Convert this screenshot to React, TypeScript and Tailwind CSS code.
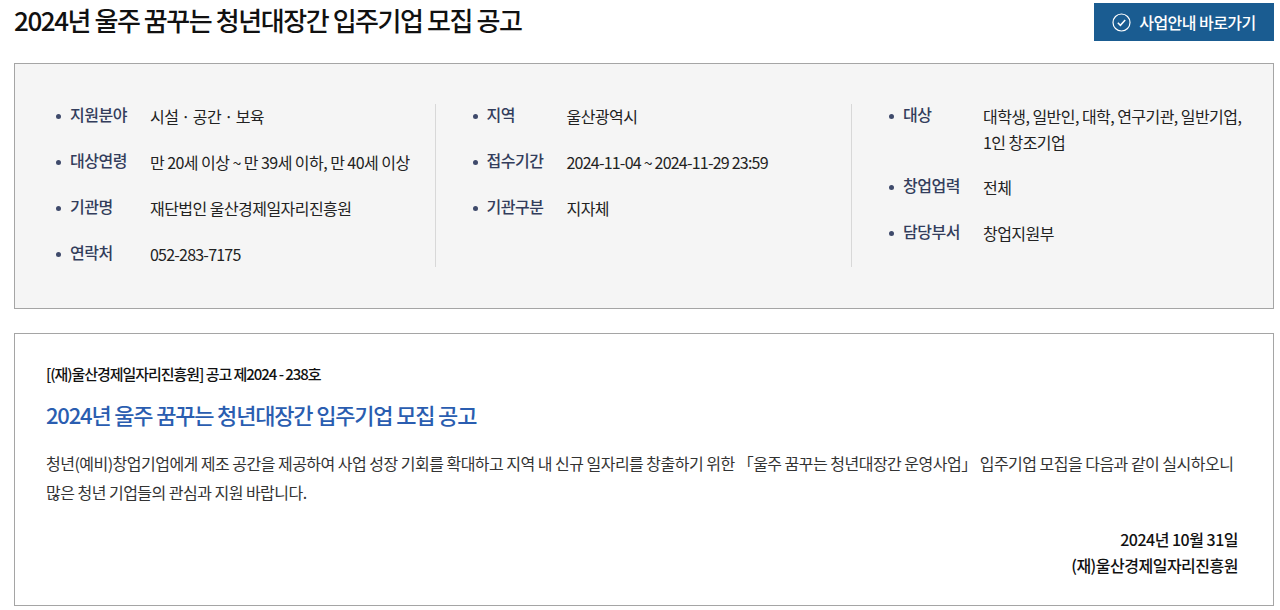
import { Fragment } from "react";

const font = "font-['Noto_Sans_CJK_KR','Noto_Sans',sans-serif]";

const col1 = [
  { label: "지원분야", value: "시설 · 공간 · 보육" },
  { label: "대상연령", value: "만 20세 이상 ~ 만 39세 이하, 만 40세 이상" },
  { label: "기관명", value: "재단법인 울산경제일자리진흥원" },
  { label: "연락처", value: "052-283-7175", tight: true },
];
const col2 = [
  { label: "지역", value: "울산광역시" },
  { label: "접수기간", value: "2024-11-04 ~ 2024-11-29 23:59", tight: true },
  { label: "기관구분", value: "지자체" },
];
const col3 = [
  { label: "대상", value: "대학생, 일반인, 대학, 연구기관, 일반기업, 1인 창조기업" },
  { label: "창업업력", value: "전체" },
  { label: "담당부서", value: "창업지원부" },
];

function InfoColumn({
  items,
  className,
}: {
  items: { label: string; value: string; tight?: boolean }[];
  className: string;
}) {
  return (
    <ul className={className}>
      {items.map((item) => (
        <li key={item.label} className="flex">
          <span className="mt-[10px] mr-[9px] ml-[1px] h-[5px] w-[5px] shrink-0 rounded-full bg-[#3f4a6b]" />
          <span className="mt-[-1px] w-[80px] shrink-0 text-[16px] leading-[22px] font-medium tracking-[-0.5px] text-[#333d5c]">
            {item.label}
          </span>
          <span
            className={
              item.tight
                ? "mt-[-1px] break-keep text-[16px] leading-[26px] tracking-[-0.78px] text-[#222]"
                : "mt-[-1px] break-keep text-[16px] leading-[26px] tracking-[-0.55px] text-[#222]"
            }
          >
            {item.value}
          </span>
        </li>
      ))}
    </ul>
  );
}

export default function App() {
  return (
    <div className={`${font} h-[610px] w-[1280px] overflow-hidden bg-white pl-[14px] pr-[6px]`}>
      <div className="flex items-start justify-between pt-[3px]">
        <h1 className="text-[26px] leading-[34px] font-medium tracking-[-1.43px] text-[#111]">
          2024년 울주 꿈꾸는 청년대장간 입주기업 모집 공고
        </h1>
        <a className="flex h-[38px] w-[180px] items-center justify-center gap-[8px] bg-[#1a5c91] text-[16px] font-medium tracking-[-0.55px] text-white">
          <svg width="19" height="19" viewBox="0 0 19 19" fill="none" stroke="currentColor" strokeWidth="1.2">
            <circle cx="9.5" cy="9.5" r="8.5" />
            <path d="M5.8 9.7 8.4 12.3 13.2 7" strokeWidth="1.5" />
          </svg>
          사업안내 바로가기
        </a>
      </div>

      <div className="mt-[22px] flex h-[246px] border border-[#a5a5a5] bg-[#f5f5f5] pt-[40px]">
        <InfoColumn
          items={col1}
          className="flex h-[163px] w-[421px] flex-col gap-[21px] border-r border-[#d8d8d8] pl-[40px]"
        />
        <InfoColumn
          items={col2}
          className="flex h-[163px] w-[416px] flex-col gap-[21px] border-r border-[#d8d8d8] pl-[35.5px]"
        />
        <InfoColumn
          items={col3}
          className="flex flex-1 flex-col gap-[20.4px] pl-[36px] pr-[24px]"
        />
      </div>

      <div className="mt-[24px] h-[273px] border border-[#a5a5a5] pl-[31px] pr-[35px] pt-[29px]">
        <p className="text-[15px] leading-[22px] font-medium tracking-[-1.05px] text-[#111]">
          [(재)울산경제일자리진흥원] 공고 제2024 - 238호
        </p>
        <h2 className="mt-[14px] text-[22px] leading-[30px] font-medium tracking-[-1.18px] text-[#2a5db0]">
          2024년 울주 꿈꾸는 청년대장간 입주기업 모집 공고
        </h2>
        <p className="mt-[20px] text-[16px] leading-[29px] tracking-[-0.52px] text-[#333]">
          {["청년(예비)창업기업에게 제조 공간을 제공하여 사업 성장 기회를 확대하고 지역 내 신규 일자리를 창출하기 위한 「울주 꿈꾸는 청년대장간 운영사업」 입주기업 모집을 다음과 같이 실시하오니", "많은 청년 기업들의 관심과 지원 바랍니다."].map((line) => (
            <Fragment key={line}>
              {line}
              <br />
            </Fragment>
          ))}
        </p>
        <div className="mt-[19px] text-right text-[16px] leading-[26px] font-medium tracking-[-0.5px] text-[#111]">
          <p>2024년 10월 31일</p>
          <p>(재)울산경제일자리진흥원</p>
        </div>
      </div>
    </div>
  );
}
